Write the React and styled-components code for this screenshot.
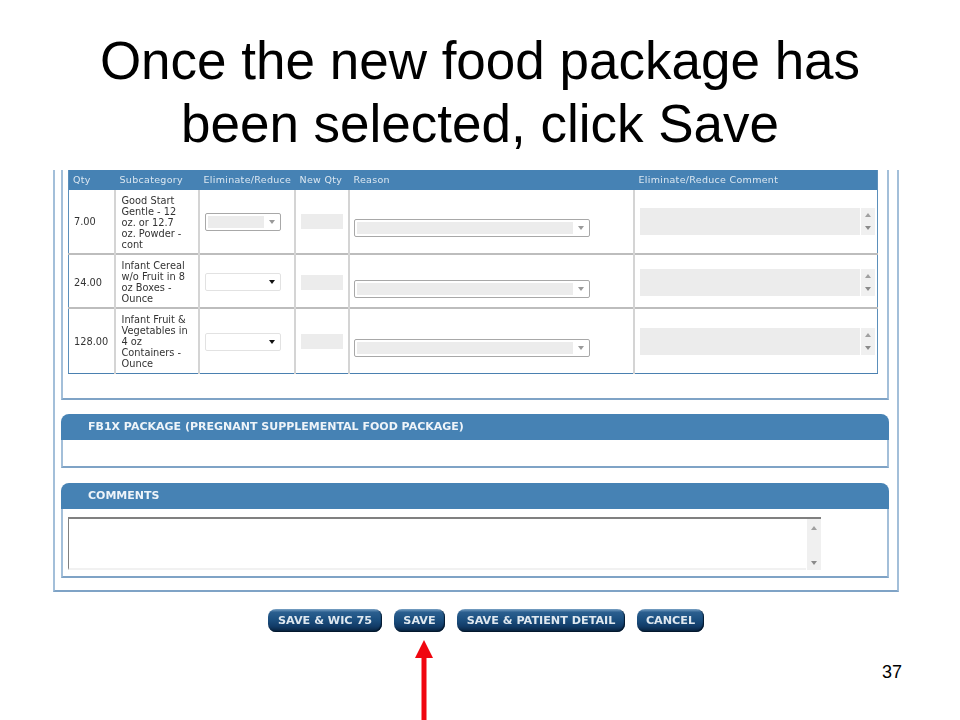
import React from "react";
import styled, { createGlobalStyle } from "styled-components";

const rows = [
  { qty: "7.00", name: "Good Start Gentle - 12 oz. or 12.7 oz. Powder - cont", locked: true, height: 64 },
  { qty: "24.00", name: "Infant Cereal w/o Fruit in 8 oz Boxes - Ounce", locked: false, height: 54 },
  { qty: "128.00", name: "Infant Fruit & Vegetables in 4 oz Containers - Ounce", locked: false, height: 65 },
];

const App = () => (
  <Slide>
    <GlobalStyle />
    <Title>
      Once the new food package has
      <br />
      been selected, click Save
    </Title>
    <Form>
      <OuterPanel>
        <TablePanel>
          <FoodTable>
            <thead>
              <tr>
                <HeadCell $w={46}>Qty</HeadCell>
                <HeadCell $w={84}>Subcategory</HeadCell>
                <HeadCell $w={96}>Eliminate/Reduce</HeadCell>
                <HeadCell $w={54}>New Qty</HeadCell>
                <HeadCell $w={285}>Reason</HeadCell>
                <HeadCell $w={244}>Eliminate/Reduce Comment</HeadCell>
              </tr>
            </thead>
            <tbody>
              {rows.map((row) => (
                <Row key={row.qty} $h={row.height}>
                  <Cell $pad={5}>{row.qty}</Cell>
                  <NameCell $pad={6}>{row.name}</NameCell>
                  <Cell $pad={5}>
                    <Select $w={76} $h={18} $muted={row.locked}>
                      {row.locked && <SelectFill $w={56} />}
                      <Caret $muted={row.locked} />
                    </Select>
                  </Cell>
                  <Cell $pad={5}>
                    <QtyInput />
                  </Cell>
                  <Cell $pad={4}>
                    <ReasonSelect $w={236} $h={18} $muted>
                      <SelectFill $w={216} />
                      <Caret $muted />
                    </ReasonSelect>
                  </Cell>
                  <Cell $pad={5}>
                    <CommentBox>
                      <ScrollBar>
                        <Arrow $up />
                        <Arrow />
                      </ScrollBar>
                    </CommentBox>
                  </Cell>
                </Row>
              ))}
            </tbody>
          </FoodTable>
        </TablePanel>

        <Section>
          <SectionHead>FB1X PACKAGE (PREGNANT SUPPLEMENTAL FOOD PACKAGE)</SectionHead>
          <SectionBody $h={26} />
        </Section>

        <Section>
          <SectionHead>COMMENTS</SectionHead>
          <SectionBody $h={67}>
            <TextBox>
              <TextScroll>
                <Arrow $up />
                <Arrow />
              </TextScroll>
            </TextBox>
          </SectionBody>
        </Section>
      </OuterPanel>

      <Buttons>
        <ActionButton $w={114}>SAVE &amp; WIC 75</ActionButton>
        <ActionButton $w={51}>SAVE</ActionButton>
        <ActionButton $w={168}>SAVE &amp; PATIENT DETAIL</ActionButton>
        <ActionButton $w={67}>CANCEL</ActionButton>
      </Buttons>
    </Form>

    <PageNumber>37</PageNumber>
    <RedArrow viewBox="0 0 18 80" aria-hidden="true">
      <path d="M9 0 L18 18 L11.5 18 L11.5 80 L6.5 80 L6.5 18 L0 18 Z" fill="#f0060f" />
    </RedArrow>
  </Slide>
);

const GlobalStyle = createGlobalStyle`
  html, body {
    margin: 0;
    background: #fff;
  }
`;

const Slide = styled.div`
  position: relative;
  width: 960px;
  height: 720px;
  overflow: hidden;
  background: #fff;
`;

const Title = styled.h1`
  margin: 0;
  padding-top: 29px;
  height: 170px;
  box-sizing: border-box;
  font: 400 53px/63px "Liberation Sans", Arial, sans-serif;
  color: #000;
  text-align: center;
`;

const Form = styled.div`
  margin-left: 53px;
  width: 846px;
  font-family: "DejaVu Sans", Verdana, sans-serif;
  filter: blur(0.3px);
`;

const OuterPanel = styled.div`
  box-sizing: border-box;
  height: 422px;
  padding: 0 8px 0 6px;
  border: 2px solid #a3bfd9;
  border-top: none;
  border-bottom-color: #7fa3c6;
`;

const TablePanel = styled.div`
  box-sizing: border-box;
  height: 230px;
  margin-bottom: 14px;
  padding: 0 8px 0 5px;
  border: 2px solid #a3bfd9;
  border-top: none;
  border-bottom-color: #7fa3c6;
`;

const FoodTable = styled.table`
  width: 810px;
  table-layout: fixed;
  border-collapse: collapse;
  border-bottom: 1px solid #4a80b0;
  border-left: 1px solid #5b8fbb;
  border-right: 1px solid #5b8fbb;
`;

const HeadCell = styled.th`
  width: ${(p) => p.$w}px;
  height: 20px;
  padding: 0 0 1px 5px;
  box-sizing: border-box;
  background: #4682b4;
  color: #dbe7f1;
  font-size: 9.5px;
  font-weight: 400;
  letter-spacing: 0.3px;
  text-align: left;
  white-space: nowrap;

  &:first-child {
    padding-left: 4px;
  }
`;

const Row = styled.tr`
  height: ${(p) => p.$h}px;
  border-bottom: 2px solid #bdbdbd;

  &:last-child {
    border-bottom: none;
  }

  tr + & > td {
    padding-top: 2px;
  }
`;

const Cell = styled.td`
  box-sizing: border-box;
  padding: 0 2px 0 ${(p) => p.$pad}px;
  border-left: 2px solid #d4d4d4;
  color: #333;
  font-size: 9.8px;
  line-height: 11px;
  vertical-align: middle;

  &:first-child {
    border-left: none;
  }
`;

const NameCell = styled(Cell)`
  padding-top: 2px;
  padding-right: 8px;
`;

const Select = styled.div`
  display: flex;
  align-items: center;
  box-sizing: border-box;
  width: ${(p) => p.$w}px;
  height: ${(p) => p.$h}px;
  padding: 2px;
  background: #fff;
  border: 1px solid ${(p) => (p.$muted ? "#a8a8a8" : "#e2e2e2")};
  border-radius: 2px;
`;

const ReasonSelect = styled(Select)`
  margin-top: 13px;
`;

const SelectFill = styled.div`
  width: ${(p) => p.$w}px;
  height: 100%;
  background: #ececec;
`;

const Caret = styled.span`
  margin-left: auto;
  margin-right: 3px;
  width: 0;
  height: 0;
  border: 3.5px solid transparent;
  border-bottom: none;
  border-top: 4px solid ${(p) => (p.$muted ? "#9a9a9a" : "#111")};
`;

const QtyInput = styled.div`
  width: 42px;
  height: 15px;
  background: #ececec;
`;

const CommentBox = styled.div`
  display: flex;
  justify-content: flex-end;
  width: 235px;
  height: 27px;
  background: #ececec;
`;

const ScrollBar = styled.div`
  box-sizing: border-box;
  display: flex;
  flex-direction: column;
  align-items: center;
  justify-content: space-between;
  width: 15px;
  padding: 5px 0 5px;
  background: #f0f0f0;
  border-left: 1px solid #fff;
`;

const Arrow = styled.span`
  width: 0;
  height: 0;
  border: 3px solid transparent;
  ${(p) =>
    p.$up
      ? "border-top: none; border-bottom: 4px solid #a0a0a0;"
      : "border-bottom: none; border-top: 4px solid #8a8a8a;"}
`;

const Section = styled.div`
  margin-bottom: 15px;
`;

const SectionHead = styled.div`
  box-sizing: border-box;
  height: 26px;
  padding: 6px 0 0 27px;
  background: #4682b4;
  border-radius: 8px 8px 0 0;
  color: #eef4f9;
  font-size: 11px;
  font-weight: 700;
  line-height: 13px;
`;

const SectionBody = styled.div`
  box-sizing: border-box;
  height: ${(p) => p.$h + 2}px;
  padding: 8px 5px 0;
  border: 2px solid #a3bfd9;
  border-top: none;
  border-bottom-color: #7fa3c6;
`;

const TextBox = styled.div`
  display: flex;
  justify-content: flex-end;
  box-sizing: border-box;
  width: 753px;
  height: 53px;
  border-top: 2px solid #808080;
  border-left: 1px solid #808080;
  border-bottom: 2px solid #f1f1f1;
`;

const TextScroll = styled(ScrollBar)`
  padding: 7px 0 5px;
  margin-bottom: -2px;
`;

const Buttons = styled.div`
  display: flex;
  justify-content: flex-start;
  gap: 12px;
  margin: 17px 0 0 215px;
`;

const ActionButton = styled.button`
  flex: none;
  box-sizing: border-box;
  width: ${(p) => p.$w}px;
  height: 23px;
  padding: 0;
  border: none;
  border-radius: 8px;
  background: linear-gradient(180deg, #7ba3c6 0%, #2b5f8f 14%, #1c5080 45%, #123c68 75%, #07203a 100%);
  box-shadow: inset -1px -1px 1px #04182d;
  color: #dfe8f0;
  font-family: "DejaVu Sans", Verdana, sans-serif;
  font-size: 11.2px;
  font-weight: 700;
  text-align: center;
  white-space: nowrap;
`;

const PageNumber = styled.div`
  position: absolute;
  right: 58px;
  top: 661px;
  font: 400 18px/22px "Liberation Sans", Arial, sans-serif;
  color: #000;
`;

const RedArrow = styled.svg`
  position: absolute;
  left: 415px;
  top: 640px;
  width: 18px;
  height: 80px;
`;

export default App;
